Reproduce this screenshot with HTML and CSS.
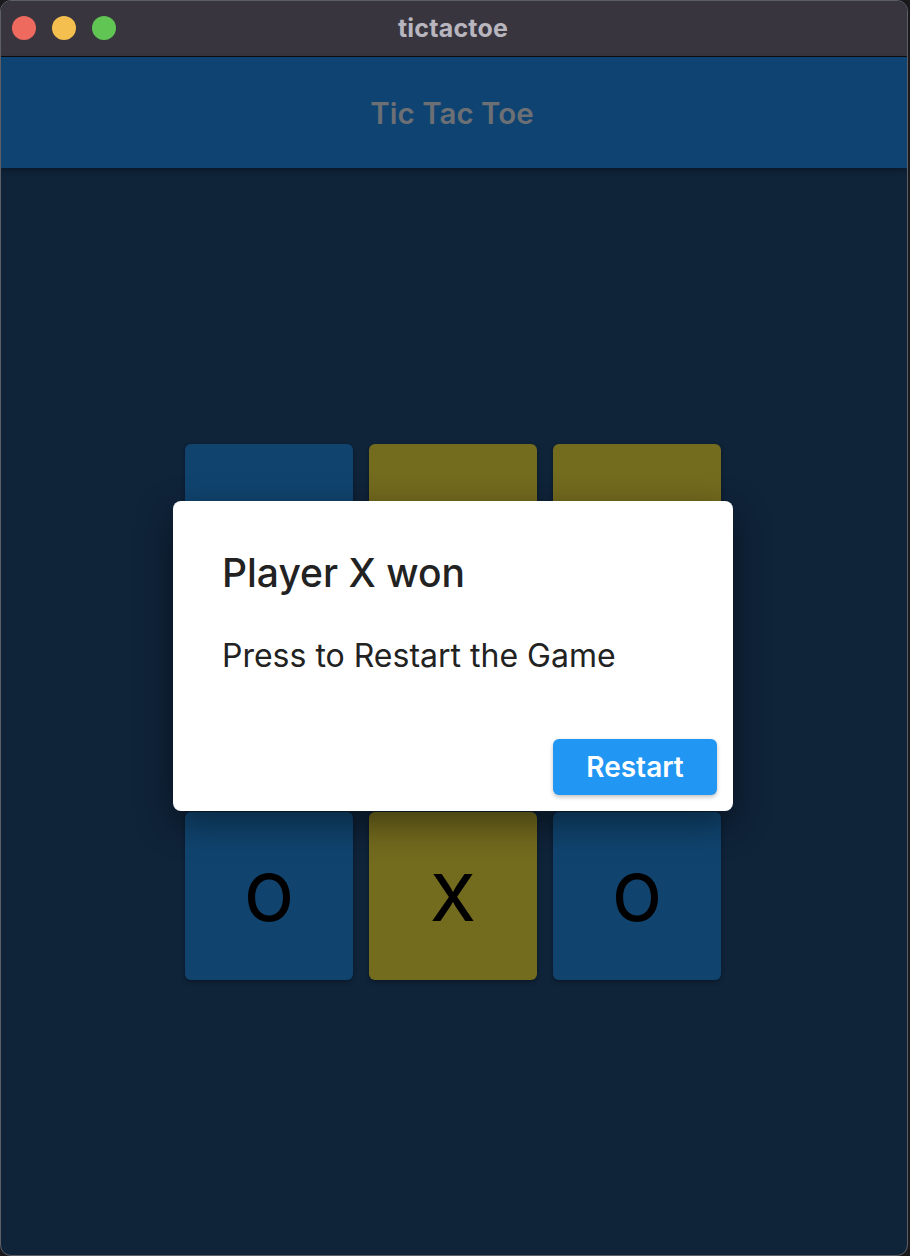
FILE: index.html
```html
<!DOCTYPE html>
<html>
<head>
<meta charset="utf-8">
<link rel="stylesheet" href="styles.css">
</head>
<body>
<div class="window">
  <div class="titlebar">
    <div class="lights">
      <span class="light red"></span>
      <span class="light yellow"></span>
      <span class="light green"></span>
    </div>
    <div class="wintitle">tictactoe</div>
  </div>
  <div class="app">
    <header class="appbar">Tic Tac Toe</header>
    <main class="board-area">
      <div class="grid">
        <div class="cell blue"></div>
        <div class="cell olive"></div>
        <div class="cell olive"></div>
        <div class="cell blue"></div>
        <div class="cell olive"></div>
        <div class="cell blue"></div>
        <div class="cell blue">O</div>
        <div class="cell olive">X</div>
        <div class="cell blue">O</div>
      </div>
    </main>
    <div class="dialog">
      <h1 class="dlg-title">Player X won</h1>
      <p class="dlg-body">Press to Restart the Game</p>
      <div class="dlg-actions">
        <button class="btn">Restart</button>
      </div>
    </div>
  </div>
</div>
</body>
</html>
```

FILE: styles.css
```css
* { box-sizing: border-box; }
html, body {
  margin: 0;
  padding: 0;
  background: #1a1a1c;
  font-family: Inter, "Noto Sans", sans-serif;
}
.window {
  width: 908px;
  height: 1256px;
  border-radius: 11px;
  border: 1px solid #5d5f66;
  overflow: hidden;
  display: flex;
  flex-direction: column;
  background: #0f2339;
}
.titlebar {
  height: 56px;
  flex: none;
  background: #38353f;
  border-bottom: 1px solid #0e0e10;
  position: relative;
  display: flex;
  align-items: center;
  justify-content: center;
}
.lights {
  position: absolute;
  left: 11px;
  top: 15px;
  display: flex;
  gap: 16px;
}
.light {
  width: 24px;
  height: 24px;
  border-radius: 50%;
  display: block;
}
.red { background: #ee6a5f; }
.yellow { background: #f5bf4f; }
.green { background: #61c554; }
.wintitle {
  color: #b9b5be;
  font-weight: 700;
  font-size: 25px;
  margin-top: -2px;
  margin-left: -2px;
  letter-spacing: 0.2px;
}
.app {
  flex: 1;
  position: relative;
  display: flex;
  flex-direction: column;
}
.appbar {
  height: 111px;
  flex: none;
  background: #0f4472;
  color: #6c6f73;
  font-size: 29.5px;
  font-weight: 600;
  display: flex;
  align-items: center;
  justify-content: center;
  padding-right: 4px;
  box-shadow: 0 2px 5px rgba(0,0,0,0.35);
  position: relative;
  z-index: 1;
}
.board-area {
  flex: 1;
  display: flex;
  align-items: center;
  justify-content: center;
}
.grid {
  display: grid;
  grid-template-columns: repeat(3, 168px);
  grid-auto-rows: 168px;
  gap: 16px;
  margin-left: -2px;
}
.cell {
  border-radius: 6px;
  display: flex;
  align-items: center;
  justify-content: center;
  font-size: 64px;
  font-weight: 500;
  color: #000;
  padding-top: 4px;
  box-shadow: 0 2px 4px rgba(0,0,0,0.3);
}
.blue { background: #10446f; }
.olive { background: #736b1e; }
.dialog {
  position: absolute;
  left: 172px;
  top: 444px;
  width: 560px;
  height: 310px;
  background: #fff;
  border-radius: 8px;
  box-shadow: 0 12px 36px rgba(0,0,0,0.45);
  padding: 49px 16px 16px 49px;
  display: flex;
  flex-direction: column;
  z-index: 2;
}
.dlg-title {
  margin: 0;
  font-size: 39px;
  font-weight: 500;
  color: #222;
  line-height: 46px;
}
.dlg-body {
  margin: 40px 0 0 0;
  font-size: 32px;
  font-weight: 400;
  color: #222;
  line-height: 40px;
}
.dlg-actions {
  margin-top: auto;
  display: flex;
  justify-content: flex-end;
}
.btn {
  width: 164px;
  height: 56px;
  border: none;
  border-radius: 6px;
  background: #2196f3;
  color: #fff;
  font-family: Inter, "Noto Sans", sans-serif;
  font-size: 28px;
  font-weight: 600;
  box-shadow: 0 2px 4px rgba(0,0,0,0.25);
  padding: 0;
}
```
